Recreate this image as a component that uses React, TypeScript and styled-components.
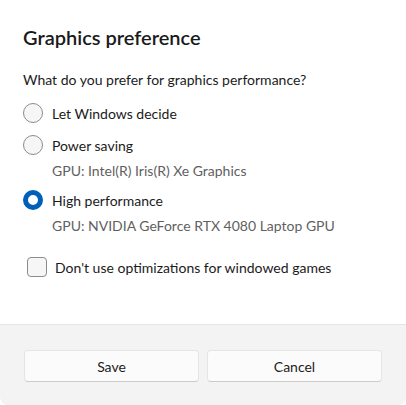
import React from 'react';
import styled, { createGlobalStyle } from 'styled-components';

const GlobalStyle = createGlobalStyle`
  html, body {
    margin: 0;
    padding: 0;
    background: #ffffff;
  }
  * {
    box-sizing: border-box;
  }
`;

const Dialog = styled.div`
  width: 406px;
  height: 405px;
  display: flex;
  flex-direction: column;
  background: #ffffff;
  border-radius: 0 0 8px 8px;
  overflow: hidden;
  font-family: Lato, 'Noto Sans', sans-serif;
  color: #1b1b1b;
`;

const Content = styled.div`
  flex: 1;
  display: flex;
  flex-direction: column;
  padding: 23px 24px 0 23px;
`;

const Title = styled.h1`
  margin: 0;
  font-size: 20px;
  line-height: 28px;
  font-weight: 600;
  color: #1a1a1a;
`;

const Question = styled.p`
  margin: 19px 0 7px;
  font-size: 14px;
  line-height: 20px;
`;

const Option = styled.label<{ $gap?: number }>`
  display: flex;
  align-items: center;
  height: 32px;
  margin-top: ${(p) => p.$gap ?? 0}px;
  font-size: 14px;
  cursor: pointer;
`;

const Radio = styled.span<{ $checked?: boolean }>`
  width: 20px;
  height: 20px;
  border-radius: 50%;
  margin-right: 9px;
  flex-shrink: 0;
  background: ${(p) => (p.$checked ? '#ffffff' : '#f6f6f6')};
  border: ${(p) => (p.$checked ? '5px solid #005fb8' : '1px solid #8b8b8b')};
`;

const Hint = styled.div`
  margin-left: 29px;
  font-size: 14px;
  line-height: 20px;
  color: #5f5f5f;
`;

const CheckRow = styled.label`
  display: flex;
  align-items: center;
  height: 32px;
  margin-top: 15px;
  padding-left: 4px;
  font-size: 14px;
  cursor: pointer;
`;

const Box = styled.span`
  width: 20px;
  height: 20px;
  border-radius: 4px;
  border: 1px solid #8b8b8b;
  background: #f6f6f6;
  margin-right: 8px;
  flex-shrink: 0;
`;

const Footer = styled.div`
  height: 81px;
  border-top: 1px solid #e5e5e5;
  background: #f3f3f3;
  display: grid;
  grid-template-columns: 1fr 1fr;
  gap: 8px;
  padding: 25px 24px 0;
  align-items: start;
`;

const Button = styled.button`
  height: 32px;
  border-radius: 4px;
  border: 1px solid #e5e5e5;
  border-bottom-color: #cccccc;
  background: #fbfbfb;
  font-family: inherit;
  font-size: 14px;
  color: #1b1b1b;
  cursor: pointer;
`;

export default function App() {
  return (
    <>
      <GlobalStyle />
      <Dialog>
        <Content>
          <Title>Graphics preference</Title>
          <Question>What do you prefer for graphics performance?</Question>
          <Option>
            <Radio />
            Let Windows decide
          </Option>
          <Option>
            <Radio />
            Power saving
          </Option>
          <Hint>GPU: Intel(R) Iris(R) Xe Graphics</Hint>
          <Option $gap={3}>
            <Radio $checked />
            High performance
          </Option>
          <Hint>GPU: NVIDIA GeForce RTX 4080 Laptop GPU</Hint>
          <CheckRow>
            <Box />
            Don't use optimizations for windowed games
          </CheckRow>
        </Content>
        <Footer>
          <Button>Save</Button>
          <Button>Cancel</Button>
        </Footer>
      </Dialog>
    </>
  );
}
